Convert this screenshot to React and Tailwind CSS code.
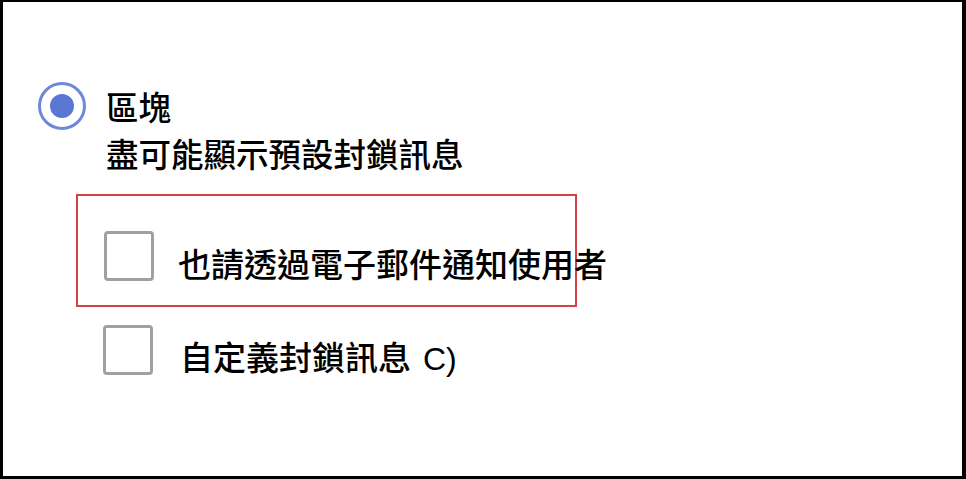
export default function App() {
  return (
    <div className="w-[966px] h-[479px] box-border bg-white border-solid border-black border-t-2 border-l-[3px] border-r-4 border-b-[3px] text-black font-['Noto_Sans_CJK_TC',sans-serif]">
      <div className="pl-[35px] pt-[80px]">
        {/* radio option */}
        <div className="flex items-start gap-[20px]">
          <div className="w-[48px] h-[48px] shrink-0 rounded-full border-[3px] border-[#6f88dc] flex items-center justify-center">
            <div className="w-[24px] h-[24px] rounded-full bg-[#5a77d3]" />
          </div>
          <div className="text-[32.5px] leading-[47px] font-medium">
            <div>區塊</div>
            <div>盡可能顯示預設封鎖訊息</div>
          </div>
        </div>

        {/* highlighted checkbox */}
        <div className="ml-[38px] mt-[18px] w-[501px] h-[113px] box-border border-2 border-[#d5414a] pl-[26px] pt-[35px] flex items-start">
          <div className="w-[50px] h-[50px] shrink-0 box-border border-[3px] border-[#a0a0a0] rounded-[4px]" />
          <div className="ml-[24px] mt-[12px] text-[33px] leading-[40px] font-medium whitespace-nowrap">
            也請透過電子郵件通知使用者
          </div>
        </div>

        <div className="ml-[65px] mt-[18px] flex items-start">
          <div className="w-[50px] h-[50px] shrink-0 box-border border-[3px] border-[#a0a0a0] rounded-[4px]" />
          <div className="ml-[27px] mt-[11px] text-[33px] leading-[40px] font-medium whitespace-nowrap flex items-baseline">
            <span>自定義封鎖訊息</span>
            <span className="ml-[12px] font-['Liberation_Sans',sans-serif] font-normal text-[32px]">C)</span>
          </div>
        </div>
      </div>
    </div>
  );
}
